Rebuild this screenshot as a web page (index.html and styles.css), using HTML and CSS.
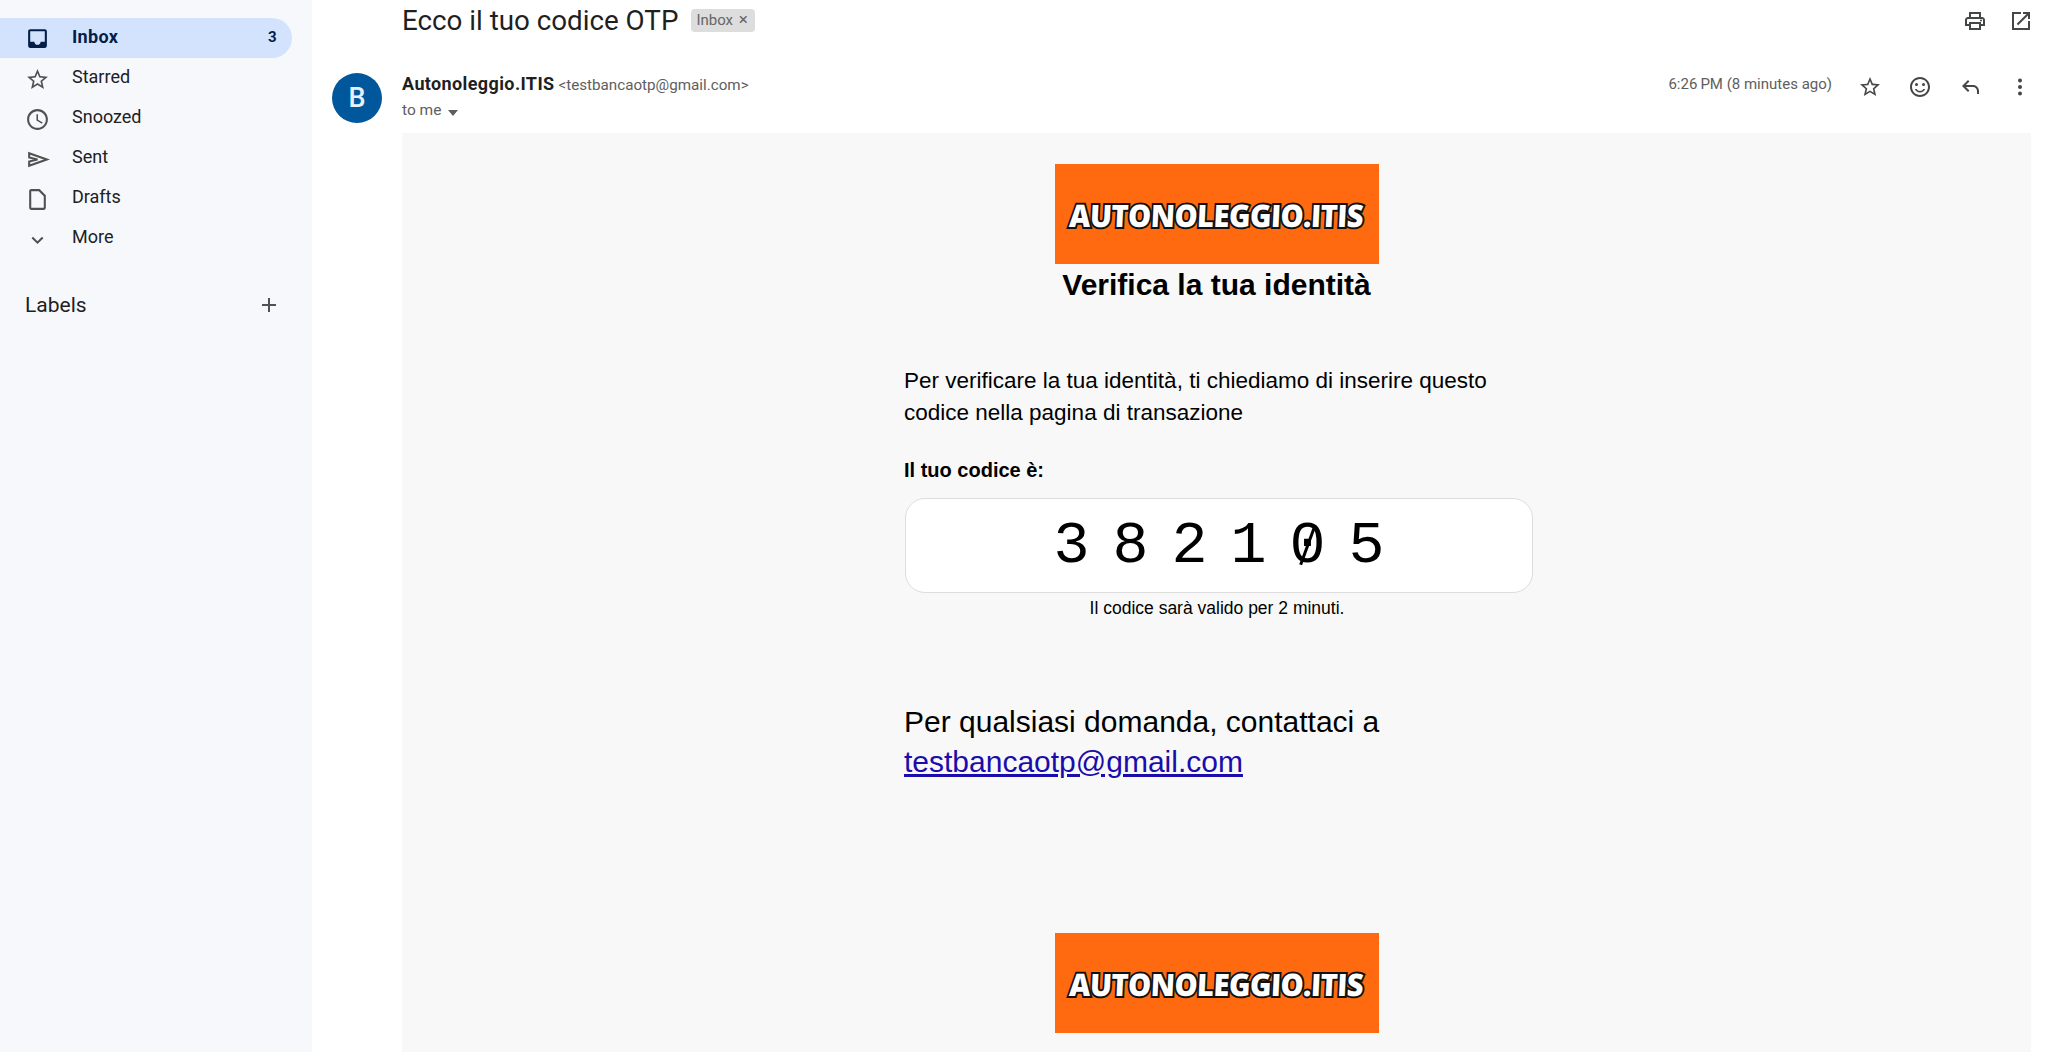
FILE: index.html
```html
<!DOCTYPE html>
<html lang="en">
<head>
    <meta charset="UTF-8">
    <meta name="viewport" content="width=device-width, initial-scale=1.0">
    <title>Ecco il tuo codice OTP</title>
    <link rel="stylesheet" href="styles.css">
</head>
<body>
    <div class="app">
        <aside class="sidebar">
            <nav class="nav">
                <a class="nav-item active">
                    <svg class="nav-icon" viewBox="0 0 24 24"><path d="M19 3H5c-1.1 0-2 .9-2 2v14c0 1.1.9 2 2 2h14c1.1 0 2-.9 2-2V5c0-1.1-.9-2-2-2zm0 12h-4c0 1.66-1.34 3-3 3s-3-1.34-3-3H5V5h14v10z"/></svg>
                    <span class="nav-label">Inbox</span>
                    <span class="nav-count">3</span>
                </a>
                <a class="nav-item">
                    <svg class="nav-icon" viewBox="0 0 24 24"><path d="M22 9.24l-7.19-.62L12 2 9.19 8.63 2 9.24l5.46 4.73L5.82 21 12 17.27 18.18 21l-1.63-7.03L22 9.24zM12 15.4l-3.76 2.27 1-4.28-3.32-2.88 4.38-.38L12 6.1l1.71 4.04 4.38.38-3.32 2.88 1 4.28L12 15.4z"/></svg>
                    <span class="nav-label">Starred</span>
                </a>
                <a class="nav-item">
                    <svg class="nav-icon" viewBox="0 0 24 24"><path d="M11.99 2C6.47 2 2 6.48 2 12s4.47 10 9.99 10C17.52 22 22 17.52 22 12S17.52 2 11.99 2zM12 20c-4.42 0-8-3.58-8-8s3.58-8 8-8 8 3.58 8 8-3.58 8-8 8zm.5-13H11v6l5.25 3.15.75-1.23-4.5-2.67z"/></svg>
                    <span class="nav-label">Snoozed</span>
                </a>
                <a class="nav-item">
                    <svg class="nav-icon" viewBox="0 0 24 24"><path d="M4 6l17 6-17 6v-4l8-2-8-2z" class="thin"/></svg>
                    <span class="nav-label">Sent</span>
                </a>
                <a class="nav-item">
                    <svg class="nav-icon" viewBox="0 0 24 24"><path d="M6 2c-1.1 0-2 .9-2 2v16c0 1.1.9 2 2 2h12c1.1 0 2-.9 2-2V8l-6-6H6zm0 18V4h7.17L18 8.83V20H6z"/></svg>
                    <span class="nav-label">Drafts</span>
                </a>
                <a class="nav-item">
                    <svg class="nav-icon" viewBox="0 0 24 24"><path d="M7 10l5 5 5-5" class="thin"/></svg>
                    <span class="nav-label">More</span>
                </a>
            </nav>
            <div class="labels-head">
                <span>Labels</span>
                <svg class="icon" viewBox="0 0 24 24"><path d="M12 5v14M5 12h14" class="thin"/></svg>
            </div>
        </aside>

        <main class="main">
            <div class="subject-row">
                <h1 class="subject">Ecco il tuo codice OTP</h1>
                <span class="chip">Inbox <span class="chip-x">×</span></span>
                <div class="subject-actions">
                    <svg class="icon" viewBox="0 0 24 24"><path d="M19 8h-1V3H6v5H5c-1.66 0-3 1.34-3 3v6h4v4h12v-4h4v-6c0-1.66-1.34-3-3-3zM8 5h8v3H8V5zm8 14H8v-4h8v4zm4-4h-2v-2H6v2H4v-4c0-.55.45-1 1-1h14c.55 0 1 .45 1 1v4z"/><circle cx="18" cy="11.5" r="1"/></svg>
                    <svg class="icon" viewBox="0 0 24 24"><path d="M19 19H5V5h7V3H3v18h18v-9h-2v7zM14 3v2h3.59l-9.83 9.83 1.41 1.41L19 6.41V10h2V3h-7z"/></svg>
                </div>
            </div>

            <div class="message-head">
                <div class="avatar">B</div>
                <div class="sender">
                    <div class="sender-line"><span class="sender-name">Autonoleggio.ITIS</span> <span class="sender-mail">&lt;testbancaotp@gmail.com&gt;</span></div>
                    <div class="to-me">to me <span class="caret"></span></div>
                </div>
                <div class="message-actions">
                    <span class="time">6:26&#8201;PM (8 minutes ago)</span>
                    <svg class="icon" viewBox="0 0 24 24"><path d="M22 9.24l-7.19-.62L12 2 9.19 8.63 2 9.24l5.46 4.73L5.82 21 12 17.27 18.18 21l-1.63-7.03L22 9.24zM12 15.4l-3.76 2.27 1-4.28-3.32-2.88 4.38-.38L12 6.1l1.71 4.04 4.38.38-3.32 2.88 1 4.28L12 15.4z"/></svg>
                    <svg class="icon" viewBox="0 0 24 24"><path d="M11.99 2C6.47 2 2 6.48 2 12s4.47 10 9.99 10C17.52 22 22 17.52 22 12S17.52 2 11.99 2zM12 20c-4.42 0-8-3.58-8-8s3.58-8 8-8 8 3.58 8 8-3.58 8-8 8z"/><circle cx="8.5" cy="9.5" r="1.5"/><circle cx="15.5" cy="9.5" r="1.5"/><path d="M12 16c-1.48 0-2.75-.81-3.45-2H6.88c.8 2.05 2.79 3.5 5.12 3.5s4.32-1.45 5.12-3.5h-1.67c-.7 1.19-1.97 2-3.45 2z"/></svg>
                    <svg class="icon" viewBox="0 0 24 24"><path d="M21 19h-2v-3c0-2.2-1.8-4-4-4H7.83l3.58 3.59L10 17l-6-6 6-6 1.41 1.41L7.83 10H15c3.3 0 6 2.7 6 6z"/></svg>
                    <svg class="icon" viewBox="0 0 24 24"><circle cx="12" cy="5.5" r="2"/><circle cx="12" cy="12" r="2"/><circle cx="12" cy="18.5" r="2"/></svg>
                </div>
            </div>

            <div class="mail-body">
                <div class="logo"><span class="logo-text">AUTONOLEGGIO.ITIS</span></div>
                <h2 class="mail-title">Verifica la tua identità</h2>
                <div class="mail-content">
                    <p class="intro">Per verificare la tua identità, ti chiediamo di inserire questo codice nella pagina di transazione</p>
                    <p class="code-label">Il tuo codice è:</p>
                    <div class="code-box">3821<span class="slashed">0</span>5</div>
                    <p class="code-note">Il codice sarà valido per 2 minuti.</p>
                    <p class="closing">Per qualsiasi domanda, contattaci a <a href="#">testbancaotp@gmail.com</a></p>
                </div>
                <div class="logo logo-bottom"><span class="logo-text">AUTONOLEGGIO.ITIS</span></div>
            </div>
        </main>
    </div>
</body>
</html>
```

FILE: styles.css
```css
* {
    box-sizing: border-box;
}
html, body {
    height: 100%;
    margin: 0;
    overflow: hidden;
}
body {
    font-family: 'Roboto', 'Liberation Sans', sans-serif;
    background: white;
    color: #1f1f1f;
}
.app {
    display: flex;
    height: 1052px;
}
.sidebar {
    width: 312px;
    flex: none;
    background-color: #f6f8fc;
    padding-top: 18px;
}
.nav-item {
    display: flex;
    align-items: center;
    width: 292px;
    height: 40px;
    padding: 0 15px 0 25px;
    border-radius: 0 20px 20px 0;
    font-size: 18px;
    font-weight: 400;
    color: #202124;
}
.nav-item.active {
    background-color: #d3e3fd;
    font-weight: 700;
    letter-spacing: 0.3px;
    color: #041e49;
}
.nav-icon {
    width: 25px;
    height: 25px;
    margin-top: 2px;
    margin-right: 22px;
    flex: none;
    fill: #4f5250;
}
.active .nav-icon {
    margin-top: 1px;
    fill: #041e49;
}
.nav-label {
    flex: 1;
    padding-bottom: 4px;
}
.nav-count {
    font-size: 15px;
    padding-bottom: 3px;
}
.thin {
    fill: none;
    stroke: #4f5250;
    stroke-width: 2;
}
.labels-head {
    display: flex;
    align-items: center;
    justify-content: space-between;
    height: 40px;
    margin-top: 27px;
    padding: 0 31px 0 25px;
    font-size: 21px;
    color: #1f1f1f;
}
.icon {
    width: 24px;
    height: 24px;
    flex: none;
    fill: #444746;
}
.main {
    flex: 1;
    display: flex;
    flex-direction: column;
    padding: 0 17px 0 20px;
    min-width: 0;
}
.subject-row {
    display: flex;
    align-items: center;
    height: 40px;
    padding-left: 70px;
}
.subject {
    margin: 0;
    font-size: 27.75px;
    font-weight: 400;
    color: #1f1f1f;
}
.chip {
    margin-left: 13px;
    padding: 0 7px 0 5px;
    height: 23px;
    line-height: 21px;
    border-radius: 4px;
    background-color: #dddddd;
    color: #666666;
    font-size: 15px;
}
.chip-x {
    margin-left: 2px;
    font-size: 17px;
}
.subject-actions {
    margin-left: auto;
    display: flex;
    gap: 22px;
    margin-right: -2px;
    margin-top: 2px;
}
.message-head {
    display: flex;
    margin-top: 33px;
    height: 60px;
}
.avatar {
    width: 50px;
    height: 50px;
    border-radius: 50%;
    background-color: #01579b;
    color: #e8f0fe;
    font-size: 27px;
    font-weight: 500;
    text-align: center;
    line-height: 50px;
}
.sender {
    margin-left: 20px;
    font-size: 16px;
    line-height: 22px;
}
.sender-line {
    display: flex;
    align-items: baseline;
    gap: 4px;
}
.sender-name {
    font-size: 18px;
    font-weight: 700;
    letter-spacing: 0.38px;
    color: #1f1f1f;
}
.sender-mail {
    font-size: 15.2px;
    color: #5e5e5e;
}
.to-me {
    margin-top: 3px;
    color: #5e5e5e;
    font-size: 15.5px;
}
.caret {
    display: inline-block;
    width: 0;
    height: 0;
    margin-left: 3px;
    border-left: 5px solid transparent;
    border-right: 5px solid transparent;
    border-top: 6px solid #5e5e5e;
    vertical-align: -1px;
}
.message-actions {
    margin-left: auto;
    display: flex;
    align-items: flex-start;
    gap: 26px;
    margin-right: -1px;
}
.time {
    font-size: 15px;
    line-height: 22px;
    color: #5e5e5e;
    margin-right: 0;
}
.message-actions .icon {
    margin-top: 2px;
}
.mail-body {
    flex: 1;
    margin-left: 70px;
    padding-top: 31px;
    background-color: #f8f8f8;
    font-family: 'Liberation Sans', Arial, sans-serif;
    color: #000;
}
.logo {
    display: flex;
    align-items: center;
    justify-content: center;
    width: 324px;
    height: 100px;
    margin: 0 auto;
    padding-top: 2px;
    background-color: #ff6a10;
}
.logo-bottom {
    margin-top: 151px;
}
.logo-text {
    font-family: 'Open Sans', sans-serif;
    font-weight: 800;
    font-size: 31px;
    letter-spacing: -0.6px;
    color: white;
    -webkit-text-stroke: 4px #111;
    paint-order: stroke fill;
    transform: scaleX(0.94) skewX(-3deg);
}
.mail-title {
    margin: 0;
    font-size: 30px;
    line-height: 42px;
    font-weight: 700;
    text-align: center;
}
.mail-content {
    width: 629px;
    margin-left: 502px;
}
.intro {
    margin: 59px 0 0;
    font-size: 22.5px;
    line-height: 32px;
}
.code-label {
    margin: 28px 0 0;
    font-size: 20px;
    line-height: 26px;
    font-weight: 700;
}
.code-box {
    margin: 15px 0 0 1px;
    height: 95px;
    border: 1px solid #dddddd;
    border-radius: 20px;
    background-color: white;
    font-family: 'Liberation Mono', monospace;
    font-size: 60px;
    line-height: 95px;
    letter-spacing: 23px;
    text-indent: 23px;
    text-align: center;
}
.slashed {
    position: relative;
    display: inline-block;
    text-indent: 0;
}
.slashed::after {
    content: '';
    position: absolute;
    left: 16px;
    top: 27px;
    width: 3px;
    height: 40px;
    background-color: #000;
    transform: rotate(20deg);
}
.code-note {
    margin: 3px 0 0;
    padding-right: 3px;
    font-size: 17.5px;
    line-height: 24px;
    text-align: center;
}
.closing {
    margin: 82px 0 0;
    font-size: 30px;
    line-height: 40px;
}
.closing a {
    color: #1a0dab;
}
```
